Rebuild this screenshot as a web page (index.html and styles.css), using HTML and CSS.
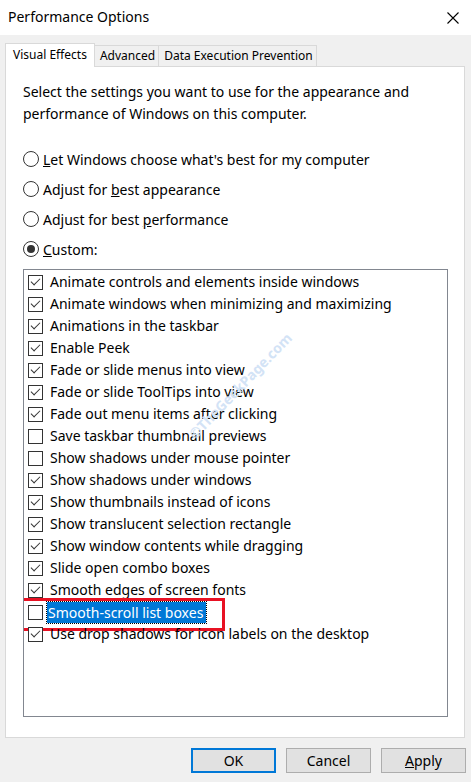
FILE: index.html
```html
<!DOCTYPE html>
<html>
<head>
<meta charset="utf-8">
<link rel="stylesheet" href="styles.css">
</head>
<body>
<div class="window">
  <div class="titlebar">
    <span class="title">Performance Options</span>
    <svg class="close" width="12" height="12" viewBox="0 0 12 12"><path d="M0.5 0.5 L11.5 11.5 M11.5 0.5 L0.5 11.5" stroke="#000" stroke-width="1.1" fill="none"/></svg>
  </div>
  <div class="content">
    <div class="tabs">
      <div class="tab active">Visual Effects</div>
      <div class="tab">Advanced</div>
      <div class="tab">Data Execution Prevention</div>
    </div>
    <div class="panel">
      <p class="intro">Select the settings you want to use for the appearance and performance of Windows on this computer.</p>
      <div class="radios">
        <div class="radio"><span class="circle"></span><span><u>L</u>et Windows choose what's best for my computer</span></div>
        <div class="radio"><span class="circle"></span><span>Adjust for <u>b</u>est appearance</span></div>
        <div class="radio"><span class="circle"></span><span>Adjust for best <u>p</u>erformance</span></div>
        <div class="radio"><span class="circle checked"></span><span><u>C</u>ustom:</span></div>
      </div>
      <div class="list">
        <div class="row"><span class="box on"></span><span class="label">Animate controls and elements inside windows</span></div>
        <div class="row"><span class="box on"></span><span class="label">Animate windows when minimizing and maximizing</span></div>
        <div class="row"><span class="box on"></span><span class="label">Animations in the taskbar</span></div>
        <div class="row"><span class="box on"></span><span class="label">Enable Peek</span></div>
        <div class="row"><span class="box on"></span><span class="label">Fade or slide menus into view</span></div>
        <div class="row"><span class="box on"></span><span class="label">Fade or slide ToolTips into view</span></div>
        <div class="row"><span class="box on"></span><span class="label">Fade out menu items after clicking</span></div>
        <div class="row"><span class="box"></span><span class="label">Save taskbar thumbnail previews</span></div>
        <div class="row"><span class="box"></span><span class="label">Show shadows under mouse pointer</span></div>
        <div class="row"><span class="box on"></span><span class="label">Show shadows under windows</span></div>
        <div class="row"><span class="box on"></span><span class="label">Show thumbnails instead of icons</span></div>
        <div class="row"><span class="box on"></span><span class="label">Show translucent selection rectangle</span></div>
        <div class="row"><span class="box on"></span><span class="label">Show window contents while dragging</span></div>
        <div class="row"><span class="box on"></span><span class="label">Slide open combo boxes</span></div>
        <div class="row"><span class="box on"></span><span class="label">Smooth edges of screen fonts</span></div>
        <div class="row highlight"><span class="box"></span><span class="label selected">Smooth-scroll list boxes</span></div>
        <div class="row"><span class="box on"></span><span class="label">Use drop shadows for icon labels on the desktop</span></div>
        <div class="watermark">©TheGeekPage.com</div>
      </div>
    </div>
    <div class="buttons">
      <div class="btn default">OK</div>
      <div class="btn">Cancel</div>
      <div class="btn"><u>A</u>pply</div>
    </div>
  </div>
</div>
</body>
</html>
```
FILE: styles.css
```css
* { box-sizing: border-box; }
html, body { margin: 0; padding: 0; }
body {
  width: 471px;
  height: 782px;
  overflow: hidden;
  background: #f0f0f0;
  font-family: "Noto Sans", "Open Sans", sans-serif;
  color: #000;
}
.window { width: 471px; height: 782px; display: flex; flex-direction: column; }
.titlebar {
  height: 35px;
  background: #fff;
  display: flex;
  align-items: center;
  justify-content: space-between;
  padding: 0 12px 0 8px;
  font-size: 14px;
}
.title { position: relative; top: -1px; }
.close { display: block; }
.content { padding: 8px 5px 0 5px; }
.tabs { display: flex; align-items: flex-end; height: 23px; position: relative; z-index: 1; }
.tab {
  height: 21px;
  border: 1px solid #d9d9d9;
  border-bottom: none;
  background: #f0f0f0;
  font-size: 12px;
  line-height: 20px;
  padding: 0 3px 0 5px;
  margin-left: -1px;
}
.tab.active {
  height: 24px;
  background: #fff;
  margin-left: 0;
  margin-bottom: -1px;
  padding: 0 7px 0 7px;
  line-height: 21px;
}
.panel {
  height: 672px;
  width: 460px;
  background: #fff;
  border: 1px solid #d9d9d9;
  padding: 14px 16px 0 17px;
}
.intro {
  margin: 0;
  font-size: 14px;
  line-height: 22px;
}
.radios { margin-top: 19px; display: flex; flex-direction: column; }
.radio {
  height: 30px;
  display: flex;
  align-items: center;
  gap: 4px;
  font-size: 14px;
}
.circle {
  width: 16px; height: 16px;
  border: 1px solid #333;
  border-radius: 50%;
  background: #fff;
  display: flex; align-items: center; justify-content: center;
}
.circle.checked::after {
  content: "";
  width: 8px; height: 8px;
  border-radius: 50%;
  background: #333;
}
.list {
  position: relative;
  margin-top: 5px;
  width: 425px;
  height: 448px;
  border: 1px solid #828790;
  padding: 1px 0 0 4px;
  overflow: hidden;
}
.row {
  height: 22px;
  display: flex;
  align-items: center;
  gap: 6px;
  font-size: 14px;
  position: relative;
}
.box {
  width: 15px; height: 15px;
  border: 1px solid #333;
  background: #fff;
  flex: none;
  position: relative;
}
.box.on::after {
  content: "";
  position: absolute;
  left: 4px; top: 0px;
  width: 4px; height: 8px;
  border-right: 1.3px solid #333;
  border-bottom: 1.3px solid #333;
  transform: rotate(45deg);
}
.label { line-height: 20px; padding: 0 1px; }
.label.selected {
  background: #0078d7;
  color: #fff;
  outline: 1px dotted #000;
  margin-left: -2px;
  padding: 0 3px 0 1px;
  line-height: 21px;
}
.highlight::before {
  content: "";
  position: absolute;
  left: -7px; top: -3px;
  width: 198px; height: 27px;
  border: 3.5px solid #e81123;
}
.watermark {
  position: absolute;
  left: 134px; top: 107px;
  width: 165px;
  text-align: center;
  font-weight: bold;
  font-size: 14px;
  line-height: 18px;
  color: #d3e3f6;
  transform: rotate(-46deg);
  white-space: nowrap;
}
.buttons {
  display: flex;
  justify-content: flex-end;
  gap: 10px;
  padding-top: 10px;
}
.btn {
  width: 85px; height: 25px;
  border: 1px solid #adadad;
  background: #e1e1e1;
  font-size: 14px;
  display: flex; align-items: center; justify-content: center;
}
.btn.default { border: 2px solid #0078d7; }
```
